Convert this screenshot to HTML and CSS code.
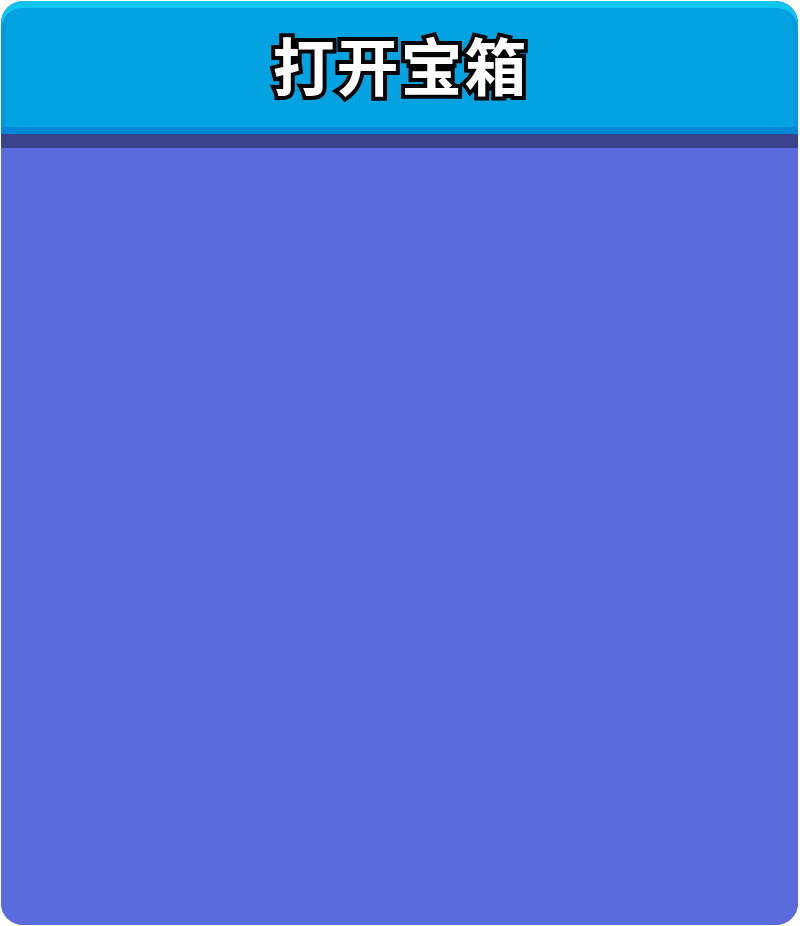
FILE: index.html
```html
<!DOCTYPE html>
<html lang="zh">
<head>
<meta charset="utf-8">
<link rel="stylesheet" href="styles.css">
</head>
<body>
<div class="panel">
  <div class="header">
    <div class="face">
      <h1 class="title">打开宝箱</h1>
    </div>
  </div>
  <div class="band"></div>
  <div class="body"></div>
</div>
</body>
</html>
```
FILE: styles.css
```css
html, body {
  margin: 0;
  padding: 0;
  background: #ffffff;
}
body {
  width: 800px;
  height: 926px;
  overflow: hidden;
}
.panel {
  margin: 1px 2px 1px 1px;
  width: 797px;
  height: 924px;
  border-radius: 22px;
  overflow: hidden;
  background: #5a6bdb;
  display: flex;
  flex-direction: column;
}
.header {
  height: 133px;
  background: #0398dc;
  border-radius: 22px 22px 0 0;
  padding: 6px 5px 7px 5px;
  box-sizing: border-box;
  border-top: 1px solid #14c8f2;
  box-shadow: inset 0 6px 0 #10c6f0, inset 0 -7px 0 #0288d8;
  display: flex;
}
.face {
  flex: 1;
  background: #03a2e0;
  border-radius: 18px 18px 0 0;
  display: flex;
  align-items: center;
  justify-content: center;
}
.title {
  margin: 0;
  font-family: "Noto Sans CJK SC", "Noto Sans", sans-serif;
  font-weight: 700;
  font-size: 62px;
  line-height: 1;
  color: #ffffff;
  -webkit-text-stroke: 8px #000000;
  paint-order: stroke fill;
  letter-spacing: 2px;
  position: relative;
  top: -4px;
  left: 1px;
}
.band {
  height: 14px;
  background: #3a428c;
}
.body {
  flex: 1;
  background: #5a6bdb;
}
```
